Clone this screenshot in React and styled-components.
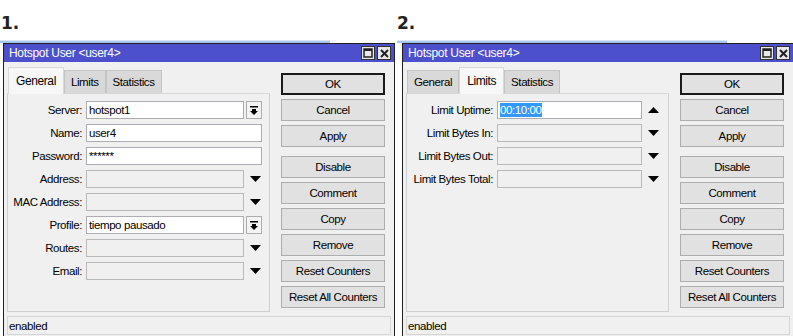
import React from 'react'
import styled, { createGlobalStyle } from 'styled-components'

const Global = createGlobalStyle`
  html, body { margin: 0; padding: 0; background: #fff; }
  body { width: 793px; height: 336px; overflow: hidden; font-family: "Liberation Sans", Arial, sans-serif; }
`;

const Page = styled.div`
  display: flex;
  width: 793px;
  height: 336px;
  overflow: hidden;
`;

const Panel = styled.div`
  width: ${(p) => p.w}px;
  flex: none;
  display: flex;
  flex-direction: column;
`;

const Number = styled.div`
  height: 40px;
  padding-left: ${(p) => p.indent}px;
  box-sizing: border-box;
  padding-top: 13px;
  font-family: "DejaVu Sans", sans-serif;
  font-weight: bold;
  font-size: 17px;
  color: #222;
`;

const Backdrop = styled.div`
  height: 3px;
  width: 330px;
  background: #a9c6ec;
  border-top: 1px solid #d8e6f8;
  box-sizing: border-box;
`;

const Window = styled.div`
  margin-left: ${(p) => p.left}px;
  width: 390px;
  flex: 1;
  border: 1px solid #202020;
  border-bottom: none;
  background: #f0f0f0;
  display: flex;
  flex-direction: column;
  font-size: 11.5px;
  letter-spacing: -0.4px;
  color: #000;
`;

const TitleBar = styled.div`
  height: 18px;
  background: #4c50cc;
  display: flex;
  align-items: center;
  padding: 0 3px 0 5px;
  color: #fff;
  font-size: 12px;
  letter-spacing: -0.3px;
`;

const Title = styled.span`
  flex: 1;
`;

const TitleButton = styled.div`
  width: 14px;
  height: 14px;
  box-sizing: border-box;
  border: 1px solid #303030;
  background: #e8e8e8;
  margin-left: 2px;
  display: flex;
  align-items: center;
  justify-content: center;
`;

const Body = styled.div`
  display: flex;
  padding: 4px 0 0 3px;
`;

const Left = styled.div`
  width: 263px;
  display: flex;
  flex-direction: column;
`;

const Tabs = styled.div`
  display: flex;
  align-items: flex-end;
  height: 27px;
  padding-left: 1px;
`;

const Tab = styled.div`
  height: ${(p) => (p.active ? 27 : 23)}px;
  box-sizing: border-box;
  padding: 0 ${(p) => (p.active ? 7 : 6)}px;
  display: flex;
  align-items: center;
  background: ${(p) => (p.active ? '#f7f7f7' : '#d9d9d9')};
  border: 1px solid ${(p) => (p.active ? '#d8d8d8' : '#c4c4c4')};
  border-bottom: none;
  font-size: ${(p) => (p.active ? 12 : 11.5)}px;
  margin-bottom: ${(p) => (p.active ? -1 : 0)}px;
  position: relative;
  z-index: ${(p) => (p.active ? 1 : 0)};
`;

const TabPanel = styled.div`
  height: 219px;
  box-sizing: border-box;
  border: 1px solid #cfcfcf;
  border-top-color: #d8d8d8;
  background: #f0f0f0;
  padding: 7px 0 0 0;
`;

const Form = styled.div`
  display: grid;
  grid-template-columns: ${(p) => p.labelW}px auto;
  column-gap: 4px;
  row-gap: 5px;
  align-items: center;
  justify-content: start;
`;

const Label = styled.div`
  text-align: right;
  white-space: nowrap;
`;

const Control = styled.div`
  display: flex;
  align-items: center;
  gap: 2px;
`;

const Field = styled.div`
  width: ${(p) => p.w}px;
  height: 18px;
  box-sizing: border-box;
  border: 1px solid ${(p) => (p.disabled ? '#b9b9b9' : '#abadb3')};
  background: ${(p) => (p.disabled ? '#f0f0f0' : '#fff')};
  padding: 0 2px;
  display: flex;
  align-items: center;
  white-space: nowrap;
  overflow: hidden;
`;

const Selected = styled.span`
  background: #3399ff;
  color: #fff;
  padding: 1px 0;
`;

const ComboButton = styled.div`
  width: 16px;
  height: 18px;
  box-sizing: border-box;
  border: 1px solid #adadad;
  background: #f4f4f4;
  display: flex;
  align-items: center;
  justify-content: center;
`;

const ArrowSlot = styled.div`
  width: 18px;
  height: 18px;
  display: flex;
  align-items: center;
  justify-content: center;
`;

const Buttons = styled.div`
  width: 104px;
  margin: 7px 0 0 11px;
  display: flex;
  flex-direction: column;
  gap: 4px;
`;

const Button = styled.div`
  height: 22px;
  box-sizing: border-box;
  border: 1px solid ${(p) => (p.primary ? '#1a1a1a' : '#adadad')};
  box-shadow: ${(p) => (p.primary ? 'inset 0 0 0 1px #1a1a1a' : 'none')};
  background: #e1e1e1;
  display: flex;
  align-items: center;
  justify-content: center;
  margin-top: ${(p) => (p.gapAbove ? 5 : 0)}px;
`;

const Status = styled.div`
  margin: 4px 3px 0 3px;
  height: 19px;
  box-sizing: border-box;
  border: 1px solid #d6d6d6;
  padding-left: 1px;
  display: flex;
  align-items: center;
`;

const Down = () => (
  <svg width="11" height="6" viewBox="0 0 11 6"><polygon points="0,0 11,0 5.5,6" fill="#000" /></svg>
)
const Up = () => (
  <svg width="11" height="6" viewBox="0 0 11 6"><polygon points="0,6 11,6 5.5,0" fill="#000" /></svg>
)
const ComboIcon = () => (
  <svg width="8" height="9" viewBox="0 0 8 9">
    <rect x="0" y="0" width="8" height="1.5" fill="#000" />
    <polygon points="2,3 6,3 6,5 8,5 4,9 0,5 2,5" fill="#000" />
  </svg>
)
const MaxIcon = () => (
  <svg width="10" height="10" viewBox="0 0 10 10"><rect x="1" y="1" width="8" height="8" fill="none" stroke="#222" strokeWidth="1.5" /><rect x="1" y="1" width="8" height="2" fill="#222" /></svg>
)
const CloseIcon = () => (
  <svg width="9" height="9" viewBox="0 0 9 9"><path d="M1 1 L8 8 M8 1 L1 8" stroke="#222" strokeWidth="2" /></svg>
)

const buttonList = ['OK', 'Cancel', 'Apply', 'Disable', 'Comment', 'Copy', 'Remove', 'Reset Counters', 'Reset All Counters']

function Row({ field, inputW }) {
  let trailing = null
  if (field.kind === 'combo') trailing = <ComboButton><ComboIcon /></ComboButton>
  if (field.kind === 'disabled') trailing = <ArrowSlot><Down /></ArrowSlot>
  if (field.kind === 'active') trailing = <ArrowSlot><Up /></ArrowSlot>
  const width = field.kind === 'text' ? inputW + 18 : inputW
  return (
    <>
      <Label>{field.label}:</Label>
      <Control>
        <Field w={width} disabled={field.kind === 'disabled'}>
          {field.kind === 'active' ? <Selected>{field.value}</Selected> : field.value}
        </Field>
        {trailing}
      </Control>
    </>
  )
}

function Dialog({ num, w, indent, left, active, fields, labelW, inputW }) {
  return (
    <Panel w={w}>
      <Number indent={indent}>{num}.</Number>
      <Backdrop />
      <Window left={left}>
        <TitleBar>
          <Title>Hotspot User &lt;user4&gt;</Title>
          <TitleButton><MaxIcon /></TitleButton>
          <TitleButton><CloseIcon /></TitleButton>
        </TitleBar>
        <Body>
          <Left>
            <Tabs>
              {['General', 'Limits', 'Statistics'].map((t) => (
                <Tab key={t} active={t === active}>{t}</Tab>
              ))}
            </Tabs>
            <TabPanel>
              <Form labelW={labelW}>
                {fields.map((f) => <Row key={f.label} field={f} inputW={inputW} />)}
              </Form>
            </TabPanel>
          </Left>
          <Buttons>
            {buttonList.map((b) => (
              <Button key={b} primary={b === 'OK'} gapAbove={b === 'Disable'}>{b}</Button>
            ))}
          </Buttons>
        </Body>
        <Status>enabled</Status>
      </Window>
    </Panel>
  )
}

const general = [
  { label: 'Server', kind: 'combo', value: 'hotspot1' },
  { label: 'Name', kind: 'text', value: 'user4' },
  { label: 'Password', kind: 'text', value: '******' },
  { label: 'Address', kind: 'disabled' },
  { label: 'MAC Address', kind: 'disabled' },
  { label: 'Profile', kind: 'combo', value: 'tiempo pausado' },
  { label: 'Routes', kind: 'disabled' },
  { label: 'Email', kind: 'disabled' },
]

const limits = [
  { label: 'Limit Uptime', kind: 'active', value: '00:10:00' },
  { label: 'Limit Bytes In', kind: 'disabled' },
  { label: 'Limit Bytes Out', kind: 'disabled' },
  { label: 'Limit Bytes Total', kind: 'disabled' },
]

export default function App() {
  return (
    <Page>
      <Global />
      <Dialog num={1} w={397} indent={1} left={3} active="General" fields={general} labelW={74} inputW={158} />
      <Dialog num={2} w={396} indent={0} left={5} active="Limits" fields={limits} labelW={86} inputW={145} />
    </Page>
  )
}
